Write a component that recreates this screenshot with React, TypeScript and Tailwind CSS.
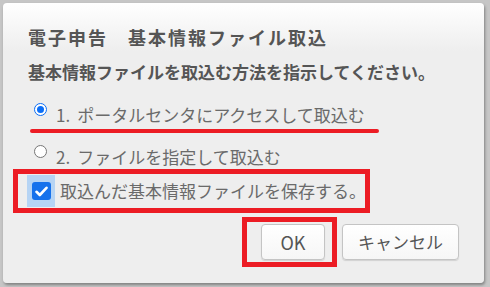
import React from 'react';

const font = { fontFamily: '"Noto Sans CJK JP", "Noto Sans", sans-serif' };

const Radio: React.FC<{ checked?: boolean }> = ({ checked }) =>
  checked ? (
    <span className="mb-[12px] flex h-[13px] w-[13px] shrink-0 items-center justify-center rounded-full border-[1.5px] border-[#0b6ef6] bg-white">
      <span className="h-[7px] w-[7px] rounded-full bg-[#0b6ef6]" />
    </span>
  ) : (
    <span className="mb-[12px] h-[13px] w-[13px] shrink-0 rounded-full border border-[#767676] bg-white" />
  );

const App: React.FC = () => {
  return (
    <div className="h-[287px] w-[490px] overflow-hidden bg-[#c6c6c6] pl-[3px] pt-[3px]" style={font}>
      <div className="h-[280px] w-[481px] rounded-[4px] bg-[linear-gradient(180deg,#ffffff_0px,#eeeeee_48px)] shadow-[1px_2px_3px_rgba(0,0,0,0.35)]">
        {/* Title */}
        <div className="pt-[22px]">
          <div className="ml-[25px] h-[24px] text-[18px] font-bold leading-[24px] tracking-[2px] text-[#555555]">
            電子申告　基本情報ファイル取込
          </div>
        </div>

        <div className="ml-[25px] mt-[11px] h-[24px] text-[17px] font-bold leading-[24px] text-[#555555]">
          基本情報ファイルを取込む方法を指示してください。
        </div>

        {/* Option 1 */}
        <div className="ml-[31px] mt-[19px] flex h-[24px] items-center gap-[9px] whitespace-nowrap text-[17px] leading-[24px] text-[#6a6a6a]">
          <Radio checked />
          <span>
            1.<span className="ml-[7px]">ポータルセンタにアクセスして取込む</span>
          </span>
        </div>
        <div className="ml-[27px] mt-[2px] h-[4px] w-[349px] rounded-full bg-[#ec1c24]" />

        {/* Option 2 */}
        <div className="ml-[31px] mt-[12px] flex h-[24px] items-center gap-[9px] whitespace-nowrap text-[17px] leading-[24px] text-[#6a6a6a]">
          <Radio />
          <span>
            2.<span className="ml-[7px]">ファイルを指定して取込む</span>
          </span>
        </div>

        {/* Save checkbox */}
        <div className="ml-[10px] flex h-[44px] w-[357px] items-center border-[5px] border-[#ec1c24]">
          <span className="ml-[9px] flex h-[32px] w-[28px] shrink-0 items-center justify-center bg-[#b6d4f4]">
            <span className="flex h-[18px] w-[19px] items-center justify-center rounded-[3px] bg-[#1672ec]">
              <svg width="13" height="11" viewBox="0 0 13 11" fill="none">
                <path d="M1.5 5.8 L4.8 9 L11.5 1.8" stroke="white" strokeWidth="2.6" strokeLinecap="round" strokeLinejoin="round" />
              </svg>
            </span>
          </span>
          <span className="ml-[5px] whitespace-nowrap text-[17px] leading-[24px] text-[#6a6a6a]">取込んだ基本情報ファイルを保存する。</span>
        </div>

        {/* Buttons */}
        <div className="ml-[239px] mt-[4px] flex items-center">
          <div className="flex h-[50px] w-[95px] items-center border-[5px] border-[#ec1c24] pl-[14px]">
            <button className="h-[36px] w-[64px] rounded-[4px] border border-[#c4c4c4] bg-[linear-gradient(180deg,#ffffff,#f6f6f6)] text-[18px] text-[#555555] shadow-[0_1px_1px_rgba(0,0,0,0.12)]">
              OK
            </button>
          </div>
          <button className="ml-[5px] h-[36px] w-[117px] rounded-[4px] border border-[#c4c4c4] bg-[linear-gradient(180deg,#ffffff,#f6f6f6)] text-[17px] text-[#555555] shadow-[0_1px_1px_rgba(0,0,0,0.12)]">
            キャンセル
          </button>
        </div>
      </div>
    </div>
  );
};

export default App;
